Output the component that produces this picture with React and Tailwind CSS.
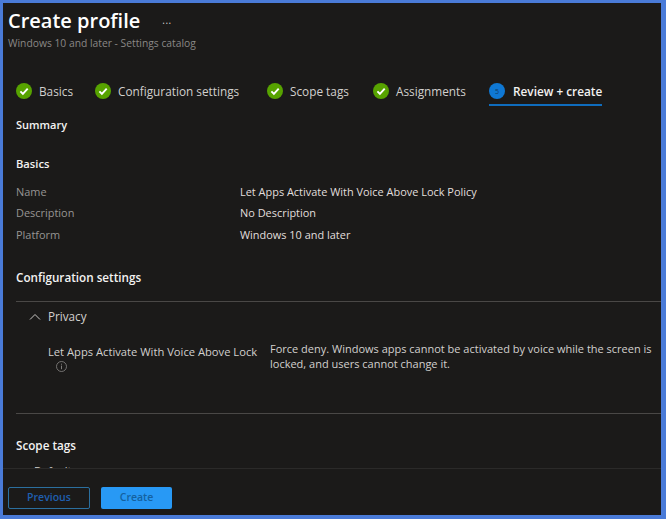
import React from "react";

const font = { fontFamily: '"Open Sans", "Noto Sans", sans-serif' };

function Check() {
  return (
    <svg width="16" height="16" viewBox="0 0 16 16" className="shrink-0">
      <circle cx="8" cy="8" r="8" fill="#57a300" />
      <path d="M4.4 8.3l2.5 2.5 4.8-5.2" fill="none" stroke="#fff" strokeWidth="1.9" />
    </svg>
  );
}

function Step({ label, className }) {
  return (
    <div className={`flex items-center gap-[7px] ${className}`}>
      <Check />
      <span className="text-[11.8px] leading-4 text-[#d2d0ce]">{label}</span>
    </div>
  );
}

function Row({ label, value }) {
  return (
    <div className="flex h-[21.5px] items-center text-[10.95px]">
      <span className="w-[224px] text-[#979593]">{label}</span>
      <span className="text-[#e1dfdd]">{value}</span>
    </div>
  );
}

export default function App() {
  return (
    <div
      style={font}
      className="flex h-[519px] w-[666px] flex-col overflow-hidden border-t-[3px] border-r-[5px] border-b-[4px] border-l-[3px] border-[#4a7bd8] bg-[#1b1a19]"
    >
      <div className="min-h-0 flex-1 overflow-hidden">
        <div className="flex items-center pt-[4px] pl-[5px]">
          <h1 className="text-[20px] leading-7 font-semibold text-white">Create profile</h1>
          <span className="mb-[3px] ml-[22px] text-[10px] leading-none tracking-[0.5px] text-[#d2d0ce]">...</span>
        </div>
        <p className="pt-[1px] pl-[5px] text-[10.3px] leading-[14px] text-[#8a8886]">Windows 10 and later - Settings catalog</p>

        <div className="mt-[31px] flex h-[32px] items-start pl-[13px] pt-[2px]">
          <Step label="Basics" className="w-[79px]" />
          <Step label="Configuration settings" className="w-[172px]" />
          <Step label="Scope tags" className="w-[106px]" />
          <Step label="Assignments" className="w-[116px]" />
          <div className="flex flex-col">
            <div className="flex items-center gap-[8px]">
              <span className="flex size-4 items-center justify-center rounded-full bg-[#0f78d4] text-[7px] leading-none text-[#123a66]">5</span>
              <span className="text-[11.8px] leading-4 font-semibold text-[#f3f2f1]">Review + create</span>
            </div>
            <div className="mt-[5px] h-[2px] bg-[#0f6cbd]" />
          </div>
        </div>

        <div className="pl-[13px]">
          <h2 className="mt-[4px] text-[11px] leading-4 font-semibold text-[#f3f2f1]">Summary</h2>
          <h2 className="mt-[23px] text-[11.2px] leading-4 font-semibold text-[#f3f2f1]">Basics</h2>
          <div className="mt-[9px]">
            <Row label="Name" value="Let Apps Activate With Voice Above Lock Policy" />
            <Row label="Description" value="No Description" />
            <Row label="Platform" value="Windows 10 and later" />
          </div>
          <h2 className="mt-[23px] text-[11.7px] leading-4 font-semibold text-[#f3f2f1]">Configuration settings</h2>
          <div className="mt-[16px] h-[1px] bg-[#4a4846]" />

          <div className="flex h-[31px] items-center">
            <svg width="12" height="12" viewBox="0 0 12 12" className="ml-[13px]">
              <path d="M1 8.5l5-5 5 5" fill="none" stroke="#c8c6c4" strokeWidth="1" />
            </svg>
            <span className="ml-[7px] text-[11.7px] text-[#d2d0ce]">Privacy</span>
          </div>

          <div className="mt-[8px] flex h-[72px] items-start">
            <div className="w-[254px] shrink-0 pl-[32px]">
              <p className="pt-[3px] text-[11.2px] leading-4 whitespace-nowrap text-[#d2d0ce]">Let Apps Activate With Voice Above Lock</p>
              <svg width="11" height="11" viewBox="0 0 11 11" className="mt-[1px] ml-[8px]">
                <circle cx="5.5" cy="5.5" r="5" fill="none" stroke="#8a8886" strokeWidth="0.8" />
                <path d="M5.5 4.6v3.6M5.5 2.7v1" stroke="#8a8886" strokeWidth="0.9" />
              </svg>
            </div>
            <p className="w-[388px] text-[11px] leading-[15px] text-[#d2d0ce]">
              Force deny. Windows apps cannot be activated by voice while the screen is locked, and users cannot change it.
            </p>
          </div>

          <div className="h-[1px] bg-[#4a4846]" />
          <h2 className="mt-[23px] text-[11.7px] leading-4 font-semibold text-[#f3f2f1]">Scope tags</h2>
          <p className="mt-[10px] pl-[18px] text-[11px] leading-4 text-[#d2d0ce]">Default</p>
        </div>
      </div>

      <div className="flex h-[47px] shrink-0 items-start gap-[11px] border-t border-[#2b2a29] pt-[18px] pl-[5px]">
        <button className="h-[22px] w-[82px] rounded-[2px] border border-[#2b6f9e] text-[10.5px] font-semibold text-[#1f5fb0]">Previous</button>
        <button className="h-[22px] w-[71px] rounded-[2px] bg-[#2899f5] text-[10.5px] font-semibold text-[#14619f]">Create</button>
      </div>
    </div>
  );
}
